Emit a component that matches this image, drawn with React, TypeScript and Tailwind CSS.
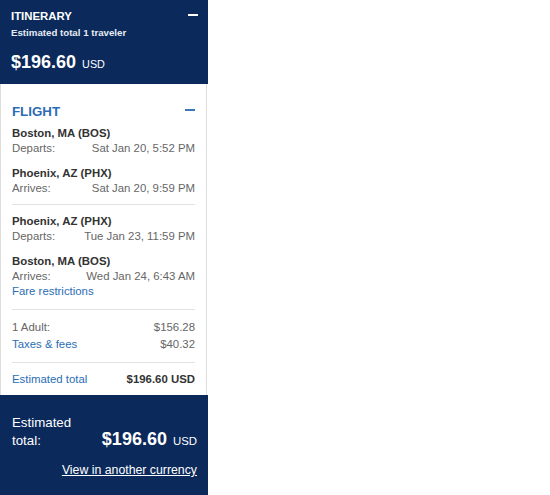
import React from "react";

const Row = ({ city, label, value }: { city: string; label: string; value: string }) => (
  <div>
    <div className="font-bold text-[#333] leading-[15px]">{city}</div>
    <div className="flex justify-between text-[#666] leading-[14px]">
      <span>{label}</span>
      <span>{value}</span>
    </div>
  </div>
);

export default function App() {
  return (
    <div className="w-[550px] h-[495px] bg-white" style={{ fontFamily: '"Liberation Sans", Arial, sans-serif' }}>
      <div className="w-[208px]">
        {/* Header */}
        <div className="bg-[#0b2a5b] text-white pl-[11px] pr-[10px] pt-[9px] h-[84px]">
          <div className="flex justify-between items-center h-[14px]">
            <span className="text-[11.4px] font-bold leading-[14px]">ITINERARY</span>
            <span className="block w-[10px] h-[2px] bg-white -mt-[2px]"></span>
          </div>
          <div className="text-[9.7px] font-bold leading-[12px] mt-[4px] text-[#e6ebf3]">Estimated total 1 traveler</div>
          <div className="mt-[12px] leading-[22px] flex items-baseline">
            <span className="text-[18px] font-bold">$196.60</span>
            <span className="text-[10.8px] ml-[6px]">USD</span>
          </div>
        </div>
        {/* Body */}
        <div className="w-[207px] h-[311px] border-x border-[#dcdcdc] px-[11px] text-[11.4px]">
          <div className="flex justify-between items-center pt-[20px] h-[35px]">
            <span className="text-[13.3px] font-bold text-[#2a6db5] leading-[16px]">FLIGHT</span>
            <span className="block w-[10px] h-[2px] bg-[#3a78b5] -mt-[4px]"></span>
          </div>
          <div className="mt-[7px]">
            <Row city="Boston, MA (BOS)" label="Departs:" value="Sat Jan 20, 5:52 PM" />
          </div>
          <div className="mt-[11px]">
            <Row city="Phoenix, AZ (PHX)" label="Arrives:" value="Sat Jan 20, 9:59 PM" />
          </div>
          <div className="border-t border-[#e2e2e2] mt-[9px]"></div>
          <div className="mt-[9px]">
            <Row city="Phoenix, AZ (PHX)" label="Departs:" value="Tue Jan 23, 11:59 PM" />
          </div>
          <div className="mt-[11px]">
            <Row city="Boston, MA (BOS)" label="Arrives:" value="Wed Jan 24, 6:43 AM" />
          </div>
          <div className="text-[#2a6db5] leading-[15px] mt-[1px]">Fare restrictions</div>
          <div className="border-t border-[#e2e2e2] mt-[10px]"></div>
          <div className="flex justify-between leading-[17px] mt-[9px] text-[#666]">
            <span>1 Adult:</span>
            <span>$156.28</span>
          </div>
          <div className="flex justify-between leading-[17px] text-[#666]">
            <span className="text-[#2a6db5]">Taxes &amp; fees</span>
            <span>$40.32</span>
          </div>
          <div className="border-t border-[#e2e2e2] mt-[9px]"></div>
          <div className="flex justify-between items-center h-[33px]">
            <span className="text-[#2a6db5]">Estimated total</span>
            <span className="font-bold text-[#333]">$196.60 USD</span>
          </div>
        </div>
        {/* Footer */}
        <div className="bg-[#0b2a5b] text-white pl-[12px] pr-[11px] pt-[19px] h-[100px]">
          <div className="flex justify-between items-end">
            <div className="text-[13.3px] leading-[18px]">
              Estimated
              <br />
              total:
            </div>
            <div className="flex items-baseline leading-[22px] mb-[-2px]">
              <span className="text-[18px] font-bold">$196.60</span>
              <span className="text-[11.4px] ml-[6px]">USD</span>
            </div>
          </div>
          <div className="text-right text-[12.3px] leading-[15px] mt-[13px] underline">View in another currency</div>
        </div>
      </div>
    </div>
  );
}
